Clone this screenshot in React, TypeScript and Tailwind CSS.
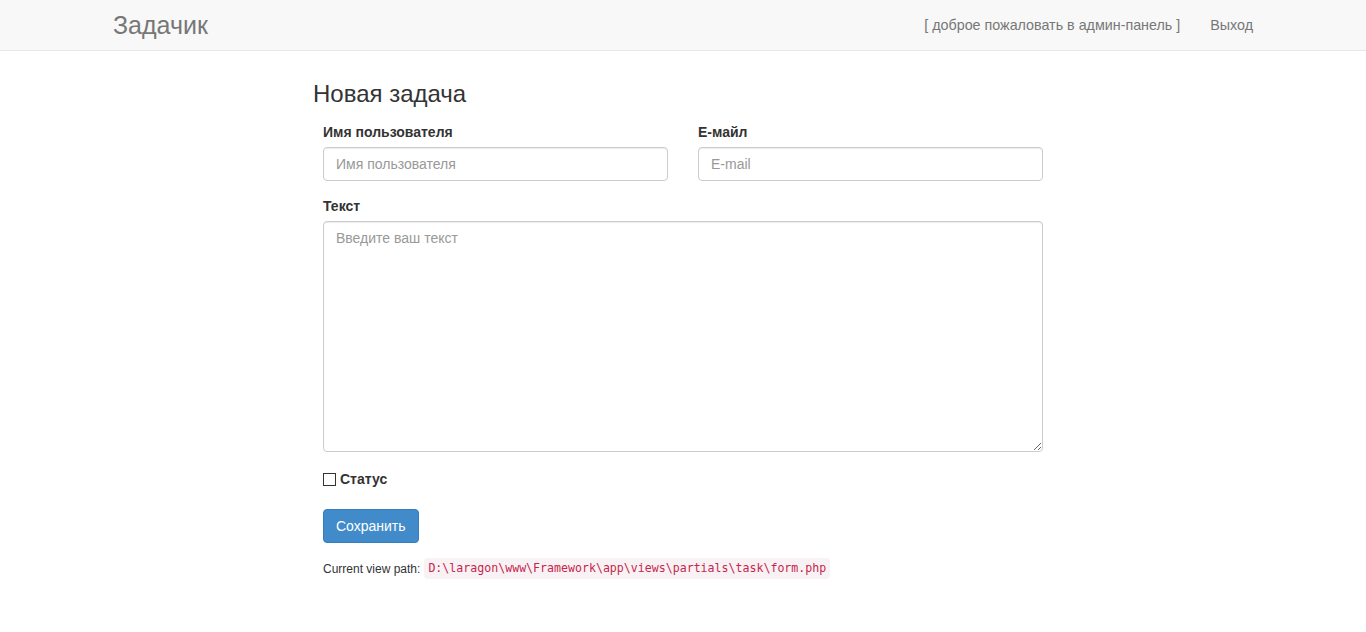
export default function App() {
  return (
    <div className="min-h-screen bg-white font-['Liberation_Sans',Arial,sans-serif] text-[14px] text-[#333]">
      <nav className="h-[51px] border-b border-[#e7e7e7] bg-[#f8f8f8]">
        <div className="mx-auto flex h-[50px] w-[1170px] items-center justify-between px-[15px]">
          <a className="text-[25px] leading-none text-[#777]">Задачик</a>
          <ul className="mt-[2px] flex items-center gap-[30px] text-[14.3px] text-[#777]">
            <li>[ доброе пожаловать в админ-панель ]</li>
            <li>Выход</li>
          </ul>
        </div>
      </nav>

      <main className="mx-auto w-[740px] pt-[30px]">
        <h3 className="mb-[15px] text-[24px] leading-[26px] text-[#333]">Новая задача</h3>

        <form className="px-[10px]">
          <div className="mb-[15px] grid grid-cols-2 gap-[30px]">
            <div>
              <label className="mb-[5px] block font-bold leading-[20px]">Имя пользователя</label>
              <input
                type="text"
                placeholder="Имя пользователя"
                className="block h-[34px] w-full rounded-[4px] border border-[#ccc] px-[12px] text-[14px] shadow-[inset_0_1px_1px_rgba(0,0,0,0.075)] outline-none placeholder:text-[#999]"
              />
            </div>
            <div>
              <label className="mb-[5px] block font-bold leading-[20px]">E-майл</label>
              <input
                type="text"
                placeholder="E-mail"
                className="block h-[34px] w-full rounded-[4px] border border-[#ccc] px-[12px] text-[14px] shadow-[inset_0_1px_1px_rgba(0,0,0,0.075)] outline-none placeholder:text-[#999]"
              />
            </div>
          </div>

          <div className="mb-[17px]">
            <label className="mb-[5px] block font-bold leading-[20px]">Текст</label>
            <textarea
              placeholder="Введите ваш текст"
              className="block h-[231px] w-full rounded-[4px] border border-[#ccc] px-[12px] py-[6px] text-[14px] leading-[20px] shadow-[inset_0_1px_1px_rgba(0,0,0,0.075)] outline-none placeholder:text-[#999]"
            />
          </div>

          <div className="mb-[20px] flex items-center leading-[20px]">
            <span className="mr-[4px] inline-block h-[13px] w-[13px] border border-[#333] bg-white" />
            <label className="font-bold">Статус</label>
          </div>

          <button
            type="button"
            className="h-[34px] rounded-[4px] border border-[#357ebd] bg-[#428bca] px-[12px] text-[14px] text-white"
          >
            Сохранить
          </button>

          <p className="mt-[15px] flex items-center text-[12px] text-[#333]">
            Current view path:
            <code className="ml-[4px] rounded-[4px] bg-[#f9f2f4] px-[4px] py-[2px] font-['DejaVu_Sans_Mono',monospace] text-[11.6px] text-[#c7254e]">
              D:\laragon\www\Framework\app\views\partials\task\form.php
            </code>
          </p>
        </form>
      </main>
    </div>
  );
}
